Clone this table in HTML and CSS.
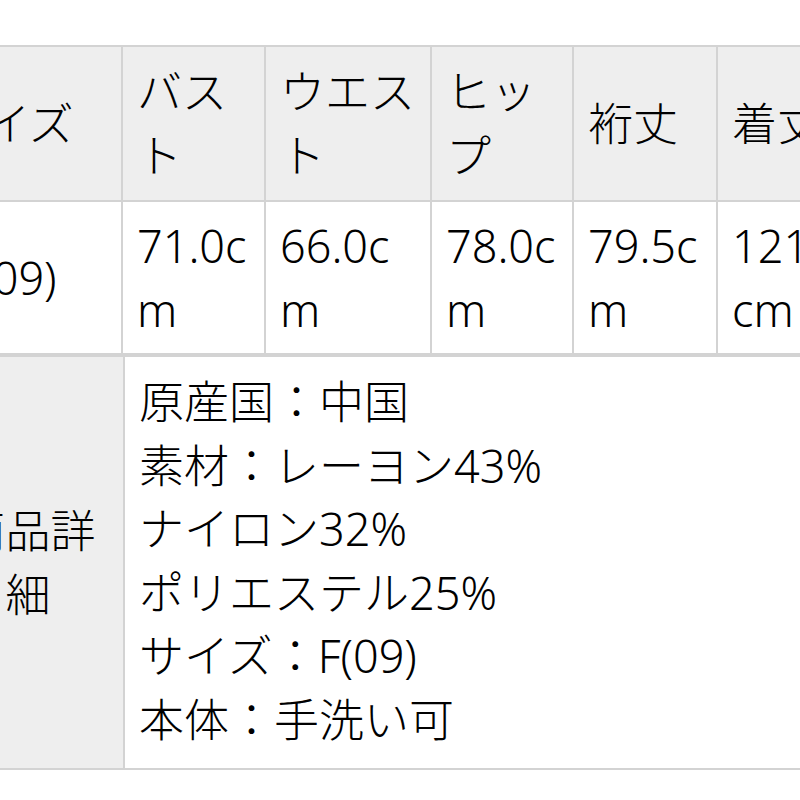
FILE: index.html
```html
<!DOCTYPE html>
<html lang="ja">
<head>
<meta charset="utf-8">
<link rel="stylesheet" href="styles.css">
</head>
<body>
<div class="page">
  <table class="size-table">
    <colgroup>
      <col class="c1"><col class="c2"><col class="c3"><col class="c4"><col class="c5"><col class="c6">
    </colgroup>
    <tr class="head">
      <td class="center">サイズ</td>
      <td>バスト</td>
      <td>ウエスト</td>
      <td>ヒップ</td>
      <td>裄丈</td>
      <td>着丈</td>
    </tr>
    <tr class="data">
      <td class="center">F(09)</td>
      <td>71.0cm</td>
      <td>66.0cm</td>
      <td>78.0cm</td>
      <td>79.5cm</td>
      <td>121cm</td>
    </tr>
  </table>
  <table class="detail-table">
    <colgroup>
      <col class="d1"><col class="d2">
    </colgroup>
    <tr>
      <td class="label">商品詳細</td>
      <td class="body">原産国：中国<br>素材：レーヨン43%<br>ナイロン32%<br>ポリエステル25%<br>サイズ：F(09)<br>本体：手洗い可</td>
    </tr>
  </table>
</div>
</body>
</html>
```
FILE: styles.css
```css
html, body {
  margin: 0;
  padding: 0;
  background: #ffffff;
  overflow: hidden;
}
body {
  width: 800px;
  height: 800px;
  font-family: "Noto Sans", "Noto Sans CJK JP", sans-serif;
  font-weight: 300;
  font-size: 45px;
  line-height: 64px;
  color: #000000;
}
.page {
  padding-top: 45px;
}
table {
  border-collapse: collapse;
  table-layout: fixed;
}
td {
  border: 2px solid #d3d3d3;
  padding: 0 14px;
  vertical-align: middle;
  text-align: left;
  word-break: break-all;
}
.size-table {
  margin-left: -109px;
  width: 948px;
}
.c1 { width: 230px; }
.c2 { width: 143px; }
.c3 { width: 166px; }
.c4 { width: 142px; }
.c5 { width: 144px; }
.c6 { width: 123px; }
.head td {
  background: #eeeeee;
  height: 153px;
}
.data td {
  height: 151px;
  background: #ffffff;
}
.center {
  text-align: center;
}
.detail-table {
  margin-left: -69px;
  width: 900px;
}
.d1 { width: 192px; }
.d2 { width: 708px; }
.detail-table td {
  border-right: none;
}
.label {
  background: #eeeeee;
  text-align: center;
}
.body {
  background: #ffffff;
  line-height: 63.5px;
  padding: 13px 14px 17px;
}
```
